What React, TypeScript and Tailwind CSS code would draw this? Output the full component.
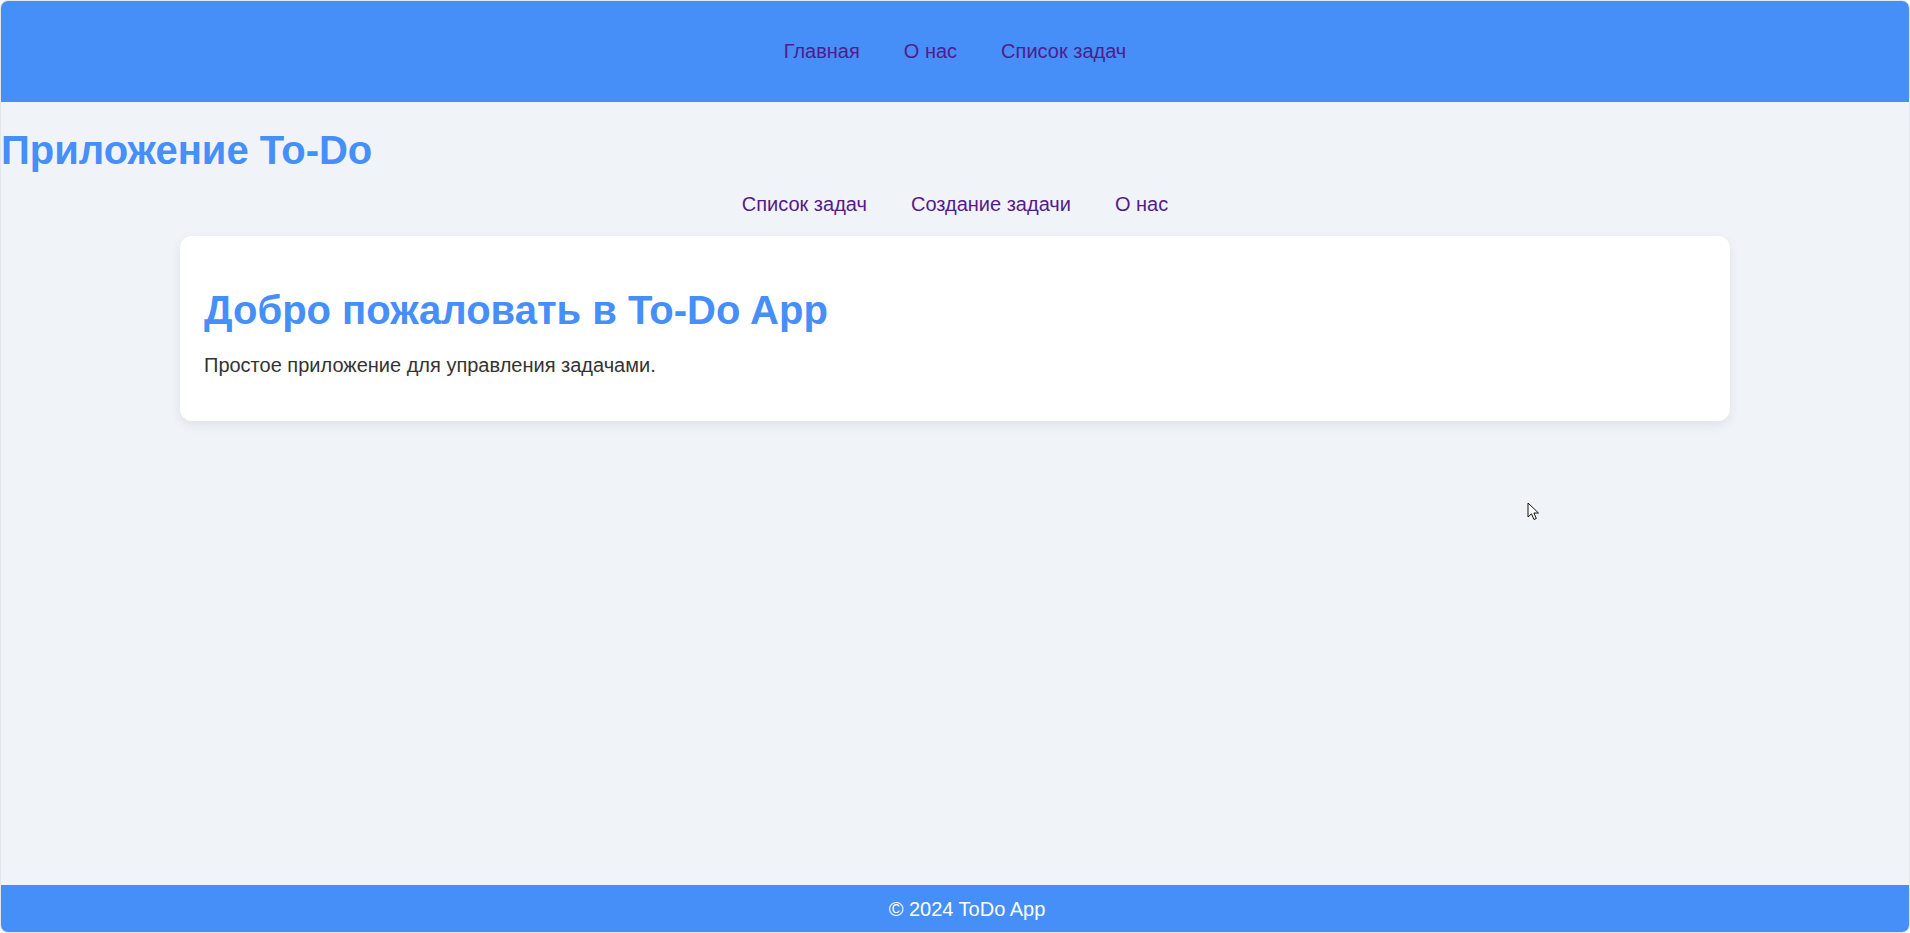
import React from "react";

const font = { fontFamily: '"Liberation Sans", Arial, sans-serif' };

function NavLink({ children }: { children: React.ReactNode }) {
    return (
        <a href="#" className="text-[20px] leading-[23px] text-[#551a8b]">
            {children}
        </a>
    );
}

export default function App() {
    return (
        <div
            className="relative flex flex-col h-screen overflow-hidden rounded-[8px] border border-[#e3e6ea] bg-[#f0f4f9] text-[20px]"
            style={font}
        >
            <header className="h-[101px] shrink-0 bg-[#468ef8] flex items-center justify-center gap-[44px]">
                <NavLink>Главная</NavLink>
                <NavLink>О нас</NavLink>
                <NavLink>Список задач</NavLink>
            </header>

            <main className="flex-1 flex flex-col">
                <h1 className="mt-[25px] text-[40px] leading-[46px] font-bold text-[#468ef8]">
                    Приложение To-Do
                </h1>
                <nav className="mt-[20px] flex justify-center gap-[44px]">
                    <NavLink>Список задач</NavLink>
                    <NavLink>Создание задачи</NavLink>
                    <NavLink>О нас</NavLink>
                </nav>
                <section className="mt-[20px] mx-[179px] bg-white rounded-[12px] shadow-[0_4px_12px_rgba(0,0,0,0.08)] px-6 pt-[24px] pb-[24px]">
                    <h2 className="mt-[27px] text-[40px] leading-[46px] font-bold text-[#468ef8]">
                        Добро пожаловать в To-Do App
                    </h2>
                    <p className="mt-[21px] mb-[20px] text-[20px] leading-[23px] text-[#333333]">
                        Простое приложение для управления задачами.
                    </p>
                </section>
            </main>

            <footer className="h-[47px] shrink-0 bg-[#468ef8] flex items-center justify-center pl-[24px] text-white text-[20px]">
                © 2024 ToDo App
            </footer>

            <svg
                className="absolute left-[1526px] top-[501px]"
                width="13"
                height="20"
                viewBox="0 0 13 20"
            >
                <path
                    d="M1 1 L1 15 L4.5 11.8 L7 17.5 L9.3 16.5 L6.9 11 L11.5 11 Z"
                    fill="white"
                    stroke="#111"
                    strokeWidth="1"
                    strokeLinejoin="round"
                />
            </svg>
        </div>
    );
}
